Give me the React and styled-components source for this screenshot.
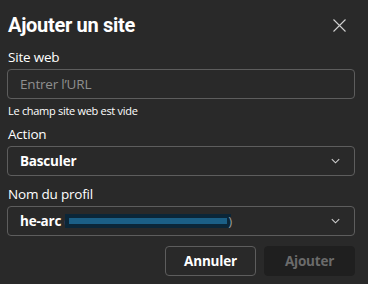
import React from 'react'
import styled, { createGlobalStyle } from 'styled-components'

const GlobalStyle = createGlobalStyle`
  html, body {
    margin: 0;
    background: #292929;
  }
  body {
    font-family: 'Open Sans', 'Noto Sans', sans-serif;
    color: #ffffff;
  }
`

const Dialog = styled.div`
  width: 368px;
  height: 284px;
  box-sizing: border-box;
  padding: 10px 13px 0 7px;
  background: #292929;
`

const Header = styled.div`
  display: flex;
  align-items: center;
  justify-content: space-between;
  height: 30px;
`

const Title = styled.h1`
  margin: 0 0 0 1px;
  font-family: Roboto, 'Liberation Sans', sans-serif;
  font-size: 20px;
  font-weight: 700;
  line-height: 30px;
  letter-spacing: -0.3px;
`

const CloseButton = styled.button`
  display: flex;
  align-items: center;
  justify-content: center;
  width: 20px;
  height: 20px;
  margin-right: 6px;
  padding: 0;
  border: none;
  background: none;
  color: #cfcfcf;
`

const Label = styled.div`
  margin: ${({ top }) => top}px 0 0 1px;
  font-size: 13.5px;
  line-height: 18px;
  letter-spacing: -0.2px;
`

const Hint = styled.div`
  margin: 4px 0 0 1px;
  font-size: 11px;
  line-height: 16px;
  letter-spacing: -0.3px;
`

const Field = styled.div`
  display: flex;
  align-items: center;
  justify-content: space-between;
  height: 30px;
  margin-top: 3px;
  box-sizing: border-box;
  padding: 0 14px 0 12px;
  border: 1px solid #5d5d5d;
  border-radius: 4px;
  font-size: 13.5px;
  font-weight: ${({ bold }) => (bold ? 700 : 400)};
  color: ${({ muted }) => (muted ? '#8f8f8f' : '#ffffff')};
  letter-spacing: -0.2px;
`

const Value = styled.span`
  display: flex;
  align-items: center;
`

const Paren = styled.span`
  font-weight: 400;
  color: #9a9a9a;
`

const Redacted = styled.span`
  display: inline-flex;
  align-items: center;
  width: 166px;
  height: 14px;
  margin: 0 -3px 0 -3px;
  box-sizing: border-box;
  padding: 0 4px;
  background: #0b2638;
`

const RedactedBar = styled.span`
  flex: 1;
  height: 6px;
  background: #1b5f86;
`

const Footer = styled.div`
  display: flex;
  justify-content: flex-end;
  gap: 8px;
  margin-top: 10px;
`

const Button = styled.button`
  width: ${({ wide }) => wide}px;
  height: 30px;
  border-radius: 4px;
  border: 1px solid ${({ primary }) => (primary ? '#1f1f1f' : '#5d5d5d')};
  background: ${({ primary }) => (primary ? '#1f1f1f' : '#292929')};
  color: ${({ primary }) => (primary ? '#6b6b6b' : '#ffffff')};
  font-family: 'Open Sans', 'Noto Sans', sans-serif;
  font-size: 13.5px;
  font-weight: 700;
  letter-spacing: -0.2px;
`

const Chevron = () => (
  <svg width='9' height='6' viewBox='0 0 9 6' fill='none'>
    <path d='M0.8 1.2l3.7 3.6 3.7-3.6' stroke='#cfcfcf' strokeWidth='1.1' />
  </svg>
)

export default function App () {
  return (
    <>
      <GlobalStyle />
      <Dialog>
        <Header>
          <Title>Ajouter un site</Title>
          <CloseButton>
            <svg width='13' height='13' viewBox='0 0 13 13' fill='none'>
              <path d='M0.5 0.5l12 12M12.5 0.5l-12 12' stroke='#d0d0d0' strokeWidth='1.1' />
            </svg>
          </CloseButton>
        </Header>
        <Label top={8}>Site web</Label>
        <Field muted>
          <Value>Entrer l’URL</Value>
        </Field>
        <Hint>Le champ site web est vide</Hint>
        <Label top={6}>Action</Label>
        <Field bold>
          <Value>Basculer</Value>
          <Chevron />
        </Field>
        <Label top={9}>Nom du profil</Label>
        <Field bold>
          <Value>
            he-arc&nbsp;<Paren>(</Paren><Redacted><RedactedBar /></Redacted><Paren>)</Paren>
          </Value>
          <Chevron />
        </Field>
        <Footer>
          <Button wide={91}>Annuler</Button>
          <Button wide={91} primary>Ajouter</Button>
        </Footer>
      </Dialog>
    </>
  )
}
